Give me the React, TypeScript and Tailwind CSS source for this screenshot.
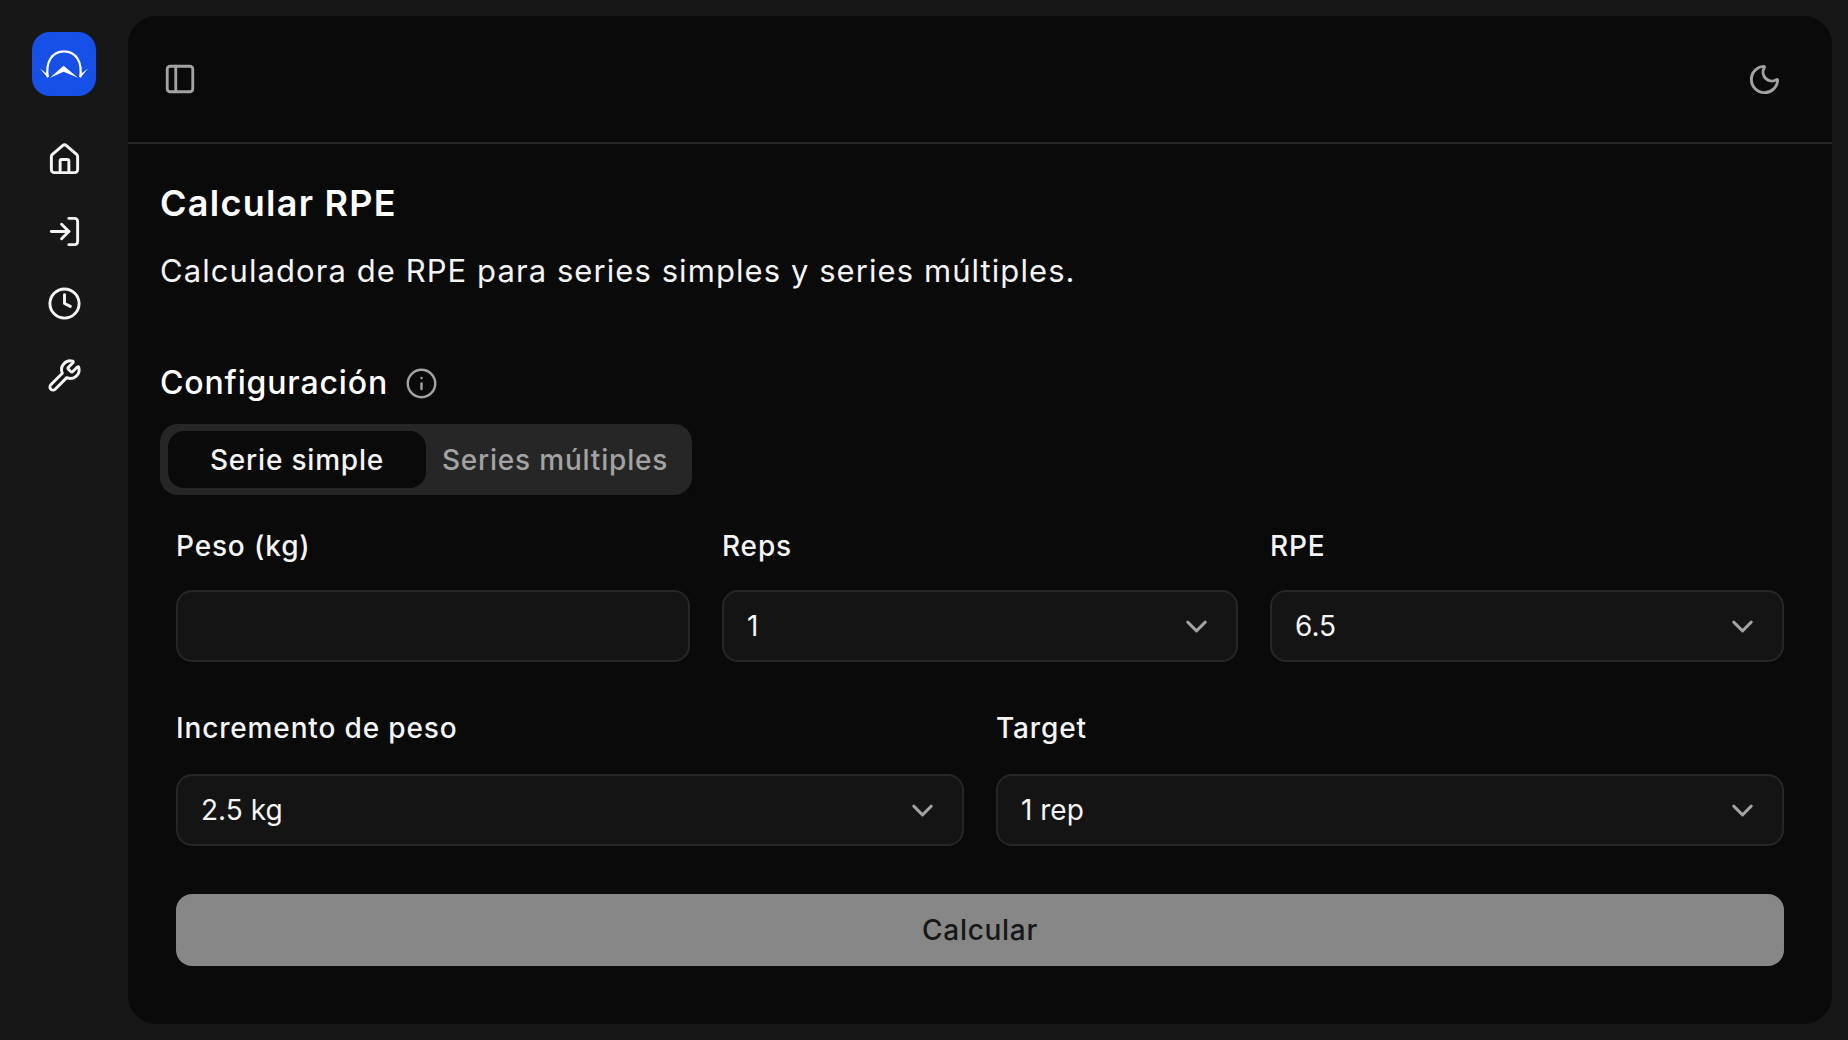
import { ChevronDown, Clock, Home, Info, LogIn, Moon, PanelLeft, Wrench } from "lucide-react";

function Logo() {
  return (
    <div className="flex h-16 w-16 items-center justify-center rounded-[18px] bg-[#1650e8]">
      <svg width="64" height="64" viewBox="0 0 64 64" fill="none">
        <path d="M15.8 45 C13.5 30 20 19.3 32 19.3 C44 19.3 50.5 30 48.2 45" stroke="#fff" strokeWidth="2.2" />
        <path d="M8 36.5 L15.8 46 L16.8 44 L14.6 41.5 Z M56 36.5 L48.2 46 L47.2 44 L49.4 41.5 Z" fill="#fff" />
        <path d="M18 45.8 L31.6 33.7 L46 45.8 L31.6 39.7 Z" fill="#fff" />
      </svg>
    </div>
  );
}

function Select({ value }: { value: string }) {
  return (
    <div className="flex h-[72px] items-center justify-between rounded-[16px] border-2 border-[#262626] bg-[#141414] pl-[23px] pr-[22px] text-[28px] text-[#f5f5f5]">
      <span>{value}</span>
      <ChevronDown size={35} strokeWidth={2} className="text-[#a3a3a3]" />
    </div>
  );
}

function Field({ label, children, tall }: { label: string; children: React.ReactNode; tall?: boolean }) {
  return (
    <div className={tall ? "flex min-w-0 flex-col gap-[30px]" : "flex min-w-0 flex-col gap-[28px]"}>
      <label className="h-[32px] text-[28px] leading-[32px] font-medium tracking-[0.85px] text-[#f5f5f5]">{label}</label>
      {children}
    </div>
  );
}

export default function App() {
  return (
    <div className="flex h-screen w-full bg-[#171717] font-['Inter',sans-serif] text-white">
      <aside className="flex w-[128px] shrink-0 flex-col items-center pt-[32px]">
        <Logo />
        <nav className="mt-[46px] flex flex-col items-center gap-[37px] text-[#f5f5f5]">
          <Home size={35} strokeWidth={2} />
          <LogIn size={35} strokeWidth={2} />
          <Clock size={35} strokeWidth={2} />
          <Wrench size={35} strokeWidth={2} />
        </nav>
      </aside>
      <main className="my-[16px] mr-[16px] flex flex-1 flex-col rounded-[28px] bg-[#0a0a0a]">
        <header className="flex h-[128px] shrink-0 items-center justify-between border-b-2 border-[#262626] pl-[35px] pr-[50px]">
          <PanelLeft size={34} strokeWidth={2} className="text-[#a3a3a3]" />
          <Moon size={35} strokeWidth={2} className="text-[#a3a3a3]" />
        </header>
        <div className="flex flex-col px-[32px]">
          <h1 className="mt-[37px] text-[36px] leading-[44px] font-semibold tracking-[1.28px]">Calcular RPE</h1>
          <p className="mt-[24px] text-[31px] leading-[44px] font-normal tracking-[1.07px] text-[#f5f5f5]">Calculadora de RPE para series simples y series múltiples.</p>
          <div className="mt-[68px] flex items-center gap-[17px]">
            <h2 className="text-[32px] leading-[44px] font-medium tracking-[0.85px]">Configuración</h2>
            <Info size={33} strokeWidth={1.75} className="text-[#a3a3a3]" />
          </div>
          <div className="mt-[19px] flex h-[71px] w-[532px] items-center rounded-[18px] bg-[#262626] px-[8px] text-[28px]">
            <div className="flex h-[57px] w-[258px] items-center justify-center rounded-[16px] bg-[#0a0a0a] font-medium tracking-[0.8px] text-[#f5f5f5]">Serie simple</div>
            <div className="flex flex-1 items-center justify-center font-medium tracking-[0.8px] text-[#a3a3a3]">Series múltiples</div>
          </div>
          <div className="flex flex-col px-[16px]">
            <div className="mt-[35px] grid grid-cols-[514px_516px_1fr] gap-[32px]">
              <Field label="Peso (kg)">
                <div className="h-[72px] rounded-[16px] border-2 border-[#262626] bg-[#141414]" />
              </Field>
              <Field label="Reps"><Select value="1" /></Field>
              <Field label="RPE"><Select value="6.5" /></Field>
            </div>
            <div className="mt-[50px] grid grid-cols-2 gap-[32px]">
              <Field tall label="Incremento de peso"><Select value="2.5 kg" /></Field>
              <Field tall label="Target"><Select value="1 rep" /></Field>
            </div>
            <button className="mt-[48px] flex h-[72px] items-center justify-center rounded-[16px] bg-[#878787] text-[28px] font-medium tracking-[0.7px] text-[#171717]">Calcular</button>
          </div>
        </div>
      </main>
    </div>
  );
}
